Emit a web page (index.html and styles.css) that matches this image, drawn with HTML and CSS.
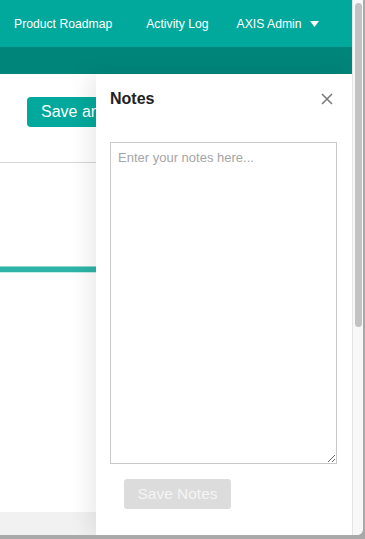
FILE: index.html
```html
<!DOCTYPE html>
<html lang="en">
<head>
  <meta charset="UTF-8" />
  <meta name="viewport" content="width=device-width, initial-scale=1.0" />
  <title>Notes</title>
  <link rel="stylesheet" href="styles.css">
</head>
<body>
  <div class="window">
    <div class="page">
      <nav class="topnav">
        <a class="nav-link">Product Roadmap</a>
        <a class="nav-link">Activity Log</a>
        <a class="nav-link user">AXIS Admin
          <svg class="caret" width="9" height="6" viewBox="0 0 9 6"><path d="M0 0H9L4.5 6Z" fill="#fff"/></svg>
        </a>
      </nav>
      <div class="subbar"></div>

      <div class="main">
        <div class="toolbar">
          <button class="btn-primary">Save and</button>
        </div>
        <div class="divider"></div>
        <div class="progress"></div>
      </div>
      <div class="footer"></div>

      <aside class="notes-panel">
        <div class="notes-head">
          <h2>Notes</h2>
          <svg class="close" width="12" height="12" viewBox="0 0 12 12">
            <path d="M1 1L11 11M11 1L1 11" stroke="#777" stroke-width="1.5" fill="none"/>
          </svg>
        </div>
        <textarea class="notes-input" placeholder="Enter your notes here..."></textarea>
        <button class="btn-save" disabled>Save Notes</button>
      </aside>
    </div>
    <div class="scrollbar"><div class="thumb"></div></div>
  </div>
</body>
</html>
```

FILE: styles.css
```css
body {
  margin: 0;
  background: #a9a9a9;
  font-family: "Liberation Sans", Arial, sans-serif;
  height: 539px;
  overflow: hidden;
}
.window {
  display: flex;
  width: 363px;
  height: 535px;
  background: #fff;
  border-bottom-right-radius: 6px;
  overflow: hidden;
}
.page {
  position: relative;
  flex: 1;
  display: flex;
  flex-direction: column;
  overflow: hidden;
  background: #fff;
}
.topnav {
  display: flex;
  align-items: center;
  height: 47px;
  padding: 1px 0 0 14px;
  box-sizing: border-box;
  background: #00a99c;
  white-space: nowrap;
}
.nav-link {
  color: #fff;
  font-size: 12.2px;
  margin-right: 34px;
}
.nav-link.user {
  margin-right: 0;
  margin-left: -6px;
}
.caret {
  margin-left: 5px;
  vertical-align: 1px;
}
.subbar {
  height: 27px;
  background: #00857a;
}
.main {
  flex: 1;
  padding-top: 23px;
}
.toolbar {
  padding-left: 27px;
  height: 30px;
}
.btn-primary {
  height: 30px;
  padding: 0 14px;
  border: none;
  border-radius: 4px;
  background: #00a99c;
  color: #fff;
  font-family: inherit;
  font-size: 16px;
  white-space: nowrap;
}
.divider {
  margin-top: 35px;
  border-top: 1px solid #d6d6d6;
}
.progress {
  margin-top: 103px;
  height: 5px;
  background: #2db4a7;
  border-top: 1px solid #8fd8d0;
  border-bottom: 1px solid #c4ece8;
}
.footer {
  height: 23px;
  background: #f1f1f1;
}
.notes-panel {
  position: absolute;
  top: 74px;
  right: 0;
  bottom: 0;
  width: 256px;
  background: #fff;
  box-shadow: -6px 0 22px rgba(0,0,0,0.09);
  padding: 0 15px 0 14px;
  box-sizing: border-box;
}
.notes-head {
  display: flex;
  justify-content: space-between;
  align-items: center;
  height: 50px;
}
.notes-head h2 {
  margin: 0;
  font-size: 16px;
  font-weight: bold;
  color: #222;
}
.close {
  margin-right: 4px;
}
.notes-input {
  display: block;
  margin-top: 18px;
  width: 227px;
  height: 322px;
  box-sizing: border-box;
  border: 1px solid #c9c9c9;
  padding: 7px;
  font-family: inherit;
  font-size: 13px;
  color: #333;
  resize: vertical;
}
.notes-input::placeholder {
  color: #a5a5a5;
}
.btn-save {
  display: block;
  margin: 15px 0 0 14px;
  width: 107px;
  height: 30px;
  border: none;
  border-radius: 3px;
  background: #dcdcdc;
  color: #f4f4f4;
  font-family: inherit;
  font-size: 15.5px;
}
.scrollbar {
  width: 11px;
  box-sizing: border-box;
  padding: 3px 1px 0 2px;
  background: #f8f8f8;
  border-left: 1px solid #e4e4e4;
}
.thumb {
  width: 7px;
  height: 324px;
  border-radius: 4px;
  background: #c2c2c2;
}
```
